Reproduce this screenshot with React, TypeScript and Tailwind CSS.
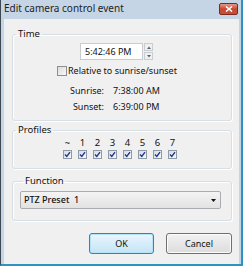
import React from "react";

const font = { fontFamily: '"Noto Sans", "Open Sans", sans-serif' };

function Check({ checked = true }: { checked?: boolean }) {
  return (
    <div className="w-[9px] h-[9px] border border-[#8e9aa6] bg-gradient-to-br from-[#d6dde6] to-[#f6f8fa] flex items-center justify-center">
      {checked && (
        <svg width="7" height="7" viewBox="0 0 7 7">
          <path d="M1 3.6 L2.8 5.4 L6 1.2" stroke="#26348a" strokeWidth="1.4" fill="none" />
        </svg>
      )}
    </div>
  );
}

function Group({ label, className, children }: { label: string; className?: string; children: React.ReactNode }) {
  return (
    <fieldset className={"border border-[#d5dfe5] rounded-[3px] shadow-[inset_1px_1px_0_#ffffff,1px_1px_0_#ffffff] " + (className ?? "")}>
      <legend className="ml-[3px] px-[2px] text-[9.5px] leading-[14px] text-[#111]">{label}</legend>
      {children}
    </fieldset>
  );
}

export default function App() {
  const profiles = ["~", "1", "2", "3", "4", "5", "6", "7"];
  return (
    <div style={font} className="w-[243px] h-[266px] flex flex-col bg-[#c6d5e5] border-l border-l-[#3d4752] border-r-2 border-r-[#2f93c0] border-b-2 border-b-[#2f93c0] text-[#111] overflow-hidden">
      <div className="h-[19px] shrink-0 flex items-start justify-between pl-[3px] pr-[3px]">
        <span className="text-[10px] leading-[13px] mt-[2px] text-[#1e1e1e]">Edit camera control event</span>
        <div className="mt-[3px] w-[19px] h-[12px] rounded-[2px] border border-[#7a2a20] bg-gradient-to-b from-[#e59a88] via-[#c8462f] to-[#c3513b] flex items-center justify-center">
          <svg width="8" height="6" viewBox="0 0 8 6">
            <path d="M1 0.5 L7 5.5 M7 0.5 L1 5.5" stroke="#ffffff" strokeWidth="1.6" />
          </svg>
        </div>
      </div>
      <div className="flex-1 ml-[3px] mr-[2px] bg-[#f0f0f0] pl-[8px] pr-[7px] pt-[8px] flex flex-col">
        <Group label="Time" className="pb-[6px]">
          <div className="pt-[2px] flex items-center pl-[67px]">
            <div className="w-[63px] h-[17px] bg-white border border-[#c8ccd1] text-[9px] leading-[15px] pl-[4px]">5:42:46 PM</div>
            <div className="ml-[1px] w-[9px] h-[17px] flex flex-col gap-[1px]">
              <div className="flex-1 border border-[#c9cdd2] bg-[#eef0f2] flex items-center justify-center">
                <svg width="4" height="3" viewBox="0 0 4 3"><path d="M0 3 L2 0.5 L4 3 Z" fill="#5a6470" /></svg>
              </div>
              <div className="flex-1 border border-[#c9cdd2] bg-[#eef0f2] flex items-center justify-center">
                <svg width="4" height="3" viewBox="0 0 4 3"><path d="M0 0 L2 2.5 L4 0 Z" fill="#5a6470" /></svg>
              </div>
            </div>
          </div>
          <div className="mt-[4px] h-[14px] flex items-center pl-[44px] gap-[1px]">
            <div className="w-[10px] h-[10px] border border-[#8e8f8f] bg-gradient-to-br from-[#dcdcdc] to-[#f8f8f8]" />
            <span className="text-[9px] leading-[14px]">Relative to sunrise/sunset</span>
          </div>
          <div className="mt-[6px] grid grid-cols-[91px_auto] gap-x-[9px] gap-y-[2px] text-[9px] leading-[14px]">
            <span className="text-right">Sunrise:</span>
            <span>7:38:00 AM</span>
            <span className="text-right">Sunset:</span>
            <span>6:39:00 PM</span>
          </div>
        </Group>
        <Group label="Profiles" className="mt-[2px] pb-[9px]">
          <div className="pl-[50px] flex gap-[6px]">
            {profiles.map((p) => (
              <div key={p} className="w-[9px] flex flex-col items-center">
                <span className="text-[9.5px] leading-[12px] h-[12px]">{p}</span>
                <div className="mt-[1px]"><Check /></div>
              </div>
            ))}
          </div>
        </Group>
        <Group label="Function" className="mt-[5px] pl-[7px] pr-[10px] pb-[11px]">
          <div className="mt-[3px] h-[18px] border border-[#a9acb0] rounded-[2px] bg-gradient-to-b from-[#f4f4f4] to-[#e2e2e2] flex items-center justify-between pl-[3px] pr-[4px]">
            <span className="text-[9px] leading-[14px] whitespace-pre font-medium">PTZ Preset  1</span>
            <svg width="5" height="3" viewBox="0 0 5 3"><path d="M0 0 L5 0 L2.5 3 Z" fill="#111" /></svg>
          </div>
        </Group>
        <div className="mt-[12px] flex justify-end gap-[12px]">
          <button className="w-[65px] h-[21px] rounded-[3px] border border-[#3c7fb1] bg-gradient-to-b from-[#eaf6fd] to-[#c4e4f6] shadow-[inset_0_0_0_1px_#b6e2f8] text-[9px] leading-[14px]">OK</button>
          <button className="w-[66px] h-[21px] rounded-[3px] border border-[#707070] bg-gradient-to-b from-[#f2f2f2] to-[#dcdcdc] shadow-[inset_0_0_0_1px_#fbfbfb] text-[9px] leading-[14px]">Cancel</button>
        </div>
      </div>
    </div>
  );
}
